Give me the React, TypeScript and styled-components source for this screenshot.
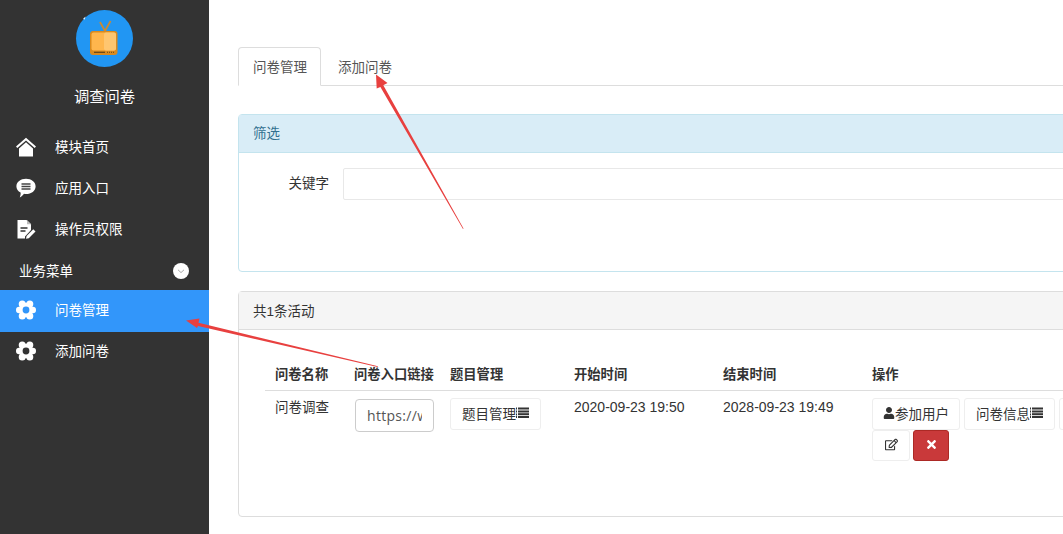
import React from "react";
import styled, { createGlobalStyle } from "styled-components";
import { FaUser, FaRegEdit, FaTimes } from "react-icons/fa";

const Global = createGlobalStyle`
  html, body { margin: 0; padding: 0; width: 1063px; height: 534px; overflow: hidden; background: #fff; }
  body { font-family: "Liberation Sans", "Noto Sans CJK SC", sans-serif; font-size: 13.5px; color: #333; }
  * { box-sizing: border-box; }
`;

const Page = styled.div`
  position: relative;
  display: flex;
  width: 1063px;
  height: 534px;
  overflow: hidden;
`;

const Sidebar = styled.aside`
  flex: 0 0 209px;
  background: #333333;
  color: #fff;
  padding-top: 10px;
  display: flex;
  flex-direction: column;
`;

const Logo = styled.div`
  width: 57px;
  height: 57px;
  margin-left: 76px;
  border-radius: 50%;
  background: #2196f3;
  svg { display: block; }
`;

const Title = styled.div`
  margin: 20px 0 19px;
  height: 20px;
  line-height: 20px;
  text-align: center;
  font-size: 15.3px;
  color: #fff;
`;

const MenuItem = styled.div<{ $active?: boolean }>`
  display: flex;
  align-items: center;
  height: ${(p) => (p.$active ? 42 : 41)}px;
  margin-bottom: ${(p) => (p.$active ? -1 : 0)}px;
  padding: 0 0 ${(p) => (p.$active ? 2 : 0)}px 16px;
  gap: 19px;
  background: ${(p) => (p.$active ? "#3296fa" : "transparent")};
  color: #fff;
  svg { flex: 0 0 20px; display: block; }
  span { position: relative; top: -1px; }
`;

const SubItem = styled(MenuItem)`
  padding-bottom: 2px;
`;

const Section = styled.div`
  display: flex;
  align-items: center;
  justify-content: space-between;
  height: 41px;
  padding: 2px 20px 0 19px;
  color: #fff;
  span { position: relative; top: -1px; }
`;

const Main = styled.main`
  flex: 0 0 870px;
  padding: 47px 0 0 29px;
`;

const Tabs = styled.div`
  display: flex;
  height: 39px;
  border-bottom: 1px solid #ddd;
`;

const Tab = styled.div<{ $active?: boolean }>`
  height: 39px;
  width: ${(p) => (p.$active ? "83px" : "auto")};
  padding: 0 14px;
  margin-right: 2px;
  line-height: 39px;
  white-space: nowrap;
  color: #555;
  background: ${(p) => (p.$active ? "#fff" : "transparent")};
  border: 1px solid ${(p) => (p.$active ? "#ddd" : "transparent")};
  border-bottom-color: ${(p) => (p.$active ? "#fff" : "transparent")};
  border-radius: 4px 4px 0 0;
`;

const Panel = styled.section<{ $info?: boolean; $h: number; $mt: number }>`
  height: ${(p) => p.$h}px;
  margin-top: ${(p) => p.$mt}px;
  border: 1px solid ${(p) => (p.$info ? "#c4e4ee" : "#ddd")};
  border-radius: 4px;
`;

const PanelHead = styled.div<{ $info?: boolean }>`
  height: 38px;
  line-height: ${(p) => (p.$info ? 37 : 39)}px;
  padding: 0 14px;
  color: ${(p) => (p.$info ? "#31708f" : "#333")};
  background: ${(p) => (p.$info ? "#d9edf7" : "#f5f5f5")};
  border-bottom: 1px solid ${(p) => (p.$info ? "#c4e4ee" : "#ddd")};
`;

const FormRow = styled.div`
  display: flex;
  align-items: flex-start;
  padding: 15px 0 0 0;
`;

const Label = styled.label`
  width: 90px;
  height: 31px;
  line-height: 31px;
  text-align: right;
  color: #333;
`;

const SearchBox = styled.input`
  flex: none;
  margin-left: 14px;
  width: 760px;
  height: 32px;
  border: 1px solid #e8e8e8;
  border-radius: 2px;
  background: #fff;
`;

const Table = styled.table`
  table-layout: fixed;
  border-collapse: collapse;
  width: 800px;
  margin: 28px 0 0 26px;
`;

const Th = styled.th<{ $w: number }>`
  width: ${(p) => p.$w}px;
  height: 32px;
  padding: 0 0 0 10px;
  text-align: left;
  font-weight: 700;
  font-size: 13.3px;
  white-space: nowrap;
  color: #333;
  border-bottom: 1px solid #ddd;
`;

const Td = styled.td<{ $pl?: number }>`
  padding: 6px 0 0 ${(p) => p.$pl ?? 10}px;
  vertical-align: top;
  line-height: 20px;
  height: 80px;
`;

const NameCell = styled(Td)`
  padding-top: 7px;
`;

const TimeCell = styled(Td)`
  font-size: 14px;
`;

const ButtonCell = styled(Td)`
  padding-top: 7px;
`;

const LinkInput = styled.input`
  display: block;
  width: 79px;
  height: 33px;
  margin-top: 2px;
  padding: 6px 11px;
  font: 14px "Open Sans", sans-serif;
  letter-spacing: 0.3px;
  color: #555;
  background: #fff;
  border: 1px solid #ccc;
  border-radius: 4px;
`;

const Btn = styled.button<{ $w: number; $danger?: boolean; $h?: number }>`
  display: inline-flex;
  align-items: center;
  justify-content: center;
  width: ${(p) => p.$w}px;
  height: ${(p) => p.$h ?? 32}px;
  flex: none;
  padding: 0 0 2px;
  font: 13.5px "Liberation Sans", "Noto Sans CJK SC", sans-serif;
  color: ${(p) => (p.$danger ? "#fff" : "#333")};
  background: ${(p) => (p.$danger ? "#c9393a" : "#fff")};
  border: 1px solid ${(p) => (p.$danger ? "#ac2925" : "#eee")};
  border-radius: 3px;
  svg { flex: none; }
`;

const BtnRow = styled.div`
  display: flex;
  gap: 4px;
  width: 260px;
`;

const BtnRowTight = styled(BtnRow)`
  gap: 3px;
`;

const Overlay = styled.svg`
  position: absolute;
  left: 0;
  top: 0;
  pointer-events: none;
`;

const ListGlyph = () => (
  <svg width="13" height="11" viewBox="0 0 13 11" fill="#333">
    <rect x="0" y="0.5" width="1" height="2" />
    <rect x="0" y="3.5" width="1" height="2" />
    <rect x="0" y="6.5" width="1" height="2" />
    <rect x="0" y="9" width="1" height="2" />
    <rect x="2" y="0.5" width="11" height="2" />
    <rect x="2" y="3.5" width="11" height="2" />
    <rect x="2" y="6.2" width="11" height="2" />
    <rect x="2" y="9" width="11" height="2" />
  </svg>
);

const HomeIcon = () => (
  <svg width="20" height="20" viewBox="0 0 20 20">
    <path d="M10 .8 20 9.600l-1.300 1.400L10 3.500 1.300 11 0 9.600z" fill="#fff" />
    <path d="M10 5.200l7 6.200V19.600H3V11.400z" fill="#fff" />
  </svg>
);

const ChatIcon = () => (
  <svg width="20" height="20" viewBox="0 0 20 20">
    <path d="M10 .8c5.400 0 9.600 3.300 9.600 7.600S15.400 16 10 16c-.7 0-1.300 0-2-.2-1 1.200-2.500 2.900-4.200 3.600 .6-1.400 1-3 .8-4.800C2 13.200.4 11 .4 8.400.4 4.100 4.600.8 10 .8z" fill="#fff" />
    <path d="M5.500 6h9M5.500 8.500h9M5.500 11h9" stroke="#444" strokeWidth="1.400" />
  </svg>
);

const FileIcon = () => (
  <svg width="20" height="20" viewBox="0 0 20 20">
    <path d="M1.500 1h9l4.500 4.500v5.500l-6 6.500v2h-7.500z" fill="#fff" />
    <path d="M11 1l4.300 4.300H11z" fill="#bbb" />
    <path d="M4.500 9h7M4.500 12h5" stroke="#333" strokeWidth="1.500" />
    <path d="M10 19.800l.6-2.800 6.700-6.700 2.200 2.200-6.700 6.700z" fill="#fff" />
  </svg>
);

const GearIcon = ({ id }: { id: string }) => (
  <svg width="20" height="20" viewBox="0 0 20 20">
    <mask id={id}>
      <rect width="20" height="20" fill="#000" />
      <g fill="#fff">
        <circle cx="10" cy="10" r="7.200" />
        <circle cx="6.200" cy="3.900" r="3.500" />
        <circle cx="13.800" cy="3.900" r="3.500" />
        <circle cx="3.200" cy="10" r="3.200" />
        <circle cx="16.800" cy="10" r="3.200" />
        <circle cx="6.200" cy="16.100" r="3.500" />
        <circle cx="13.800" cy="16.100" r="3.500" />
      </g>
      <circle cx="10" cy="10" r="3.400" fill="#000" />
    </mask>
    <rect width="20" height="20" fill="#fff" mask={`url(#${id})`} />
  </svg>
);

const ChevronCircle = () => (
  <svg width="16" height="16" viewBox="0 0 16 16">
    <circle cx="8" cy="8" r="8" fill="#fff" />
    <path d="M5 6.800l3 2.800 3-2.800" fill="none" stroke="#aaa" strokeWidth="1" />
  </svg>
);

const TvLogo = () => (
  <svg width="57" height="57" viewBox="0 0 57 57">
    <path d="M7 9l2.500-2.500-.7 3z" fill="#e8f2fb" />
    <path d="M29 21l-5-9M29 21l5.500-10" stroke="#c98a35" strokeWidth="1.800" fill="none" />
    <rect x="14" y="21" width="27.500" height="24" rx="3" fill="#d98a1e" />
    <rect x="15.500" y="22.500" width="24.500" height="18" rx="2" fill="#ffb64d" />
    <rect x="28" y="22.500" width="12" height="18" rx="2" fill="#ffc670" />
    <rect x="18" y="41.700" width="11" height="1.300" fill="#6d4a1a" />
    <path d="M31 42.300h7" stroke="#7a5520" strokeWidth="1.200" strokeDasharray="1 1" />
  </svg>
);

export default function App() {
  return (
    <Page>
      <Global />
      <Sidebar>
        <Logo>
          <TvLogo />
        </Logo>
        <Title>调查问卷</Title>
        <MenuItem><HomeIcon /><span>模块首页</span></MenuItem>
        <MenuItem><ChatIcon /><span>应用入口</span></MenuItem>
        <MenuItem><FileIcon /><span>操作员权限</span></MenuItem>
        <Section>
          <span>业务菜单</span>
          <ChevronCircle />
        </Section>
        <MenuItem $active><GearIcon id="gear-a" /><span>问卷管理</span></MenuItem>
        <SubItem><GearIcon id="gear-b" /><span>添加问卷</span></SubItem>
      </Sidebar>
      <Main>
        <Tabs>
          <Tab $active>问卷管理</Tab>
          <Tab>添加问卷</Tab>
        </Tabs>
        <Panel $info $h={158} $mt={28}>
          <PanelHead $info>筛选</PanelHead>
          <FormRow>
            <Label>关键字</Label>
            <SearchBox />
          </FormRow>
        </Panel>
        <Panel $h={226} $mt={19}>
          <PanelHead>共1条活动</PanelHead>
          <Table>
            <thead>
              <tr>
                <Th $w={79}>问卷名称</Th>
                <Th $w={96}>问卷入口链接</Th>
                <Th $w={124}>题目管理</Th>
                <Th $w={149}>开始时间</Th>
                <Th $w={149}>结束时间</Th>
                <Th $w={203}>操作</Th>
              </tr>
            </thead>
            <tbody>
              <tr>
                <NameCell>问卷调查</NameCell>
                <Td $pl={11}><LinkInput readOnly value="https://www.example.com/" /></Td>
                <ButtonCell><Btn $w={91}>题目管理<ListGlyph /></Btn></ButtonCell>
                <TimeCell>2020-09-23 19:50</TimeCell>
                <TimeCell>2028-09-23 19:49</TimeCell>
                <ButtonCell>
                  <BtnRow>
                    <Btn $w={88}><FaUser size={12} />参加用户</Btn>
                    <Btn $w={91}>问卷信息<ListGlyph /></Btn>
                    <Btn $w={30}>&nbsp;</Btn>
                  </BtnRow>
                  <BtnRowTight>
                    <Btn $w={38} $h={31}><FaRegEdit size={13} /></Btn>
                    <Btn $w={36} $h={31} $danger><FaTimes size={13} /></Btn>
                  </BtnRowTight>
                </ButtonCell>
              </tr>
            </tbody>
          </Table>
        </Panel>
      </Main>
      <Overlay width="1063" height="534" viewBox="0 0 1063 534">
        <path d="M463.500 228.500 383.300 85.300 387.500 83 376 74.500 376.700 88.500 380.400 86.900 463 229z" fill="#e8403f" />
        <path d="M378 366.300 198.500 322.800 199.500 318.500 186 320.500 197 328 198 326 377.500 367z" fill="#e8403f" />
      </Overlay>
    </Page>
  );
}
